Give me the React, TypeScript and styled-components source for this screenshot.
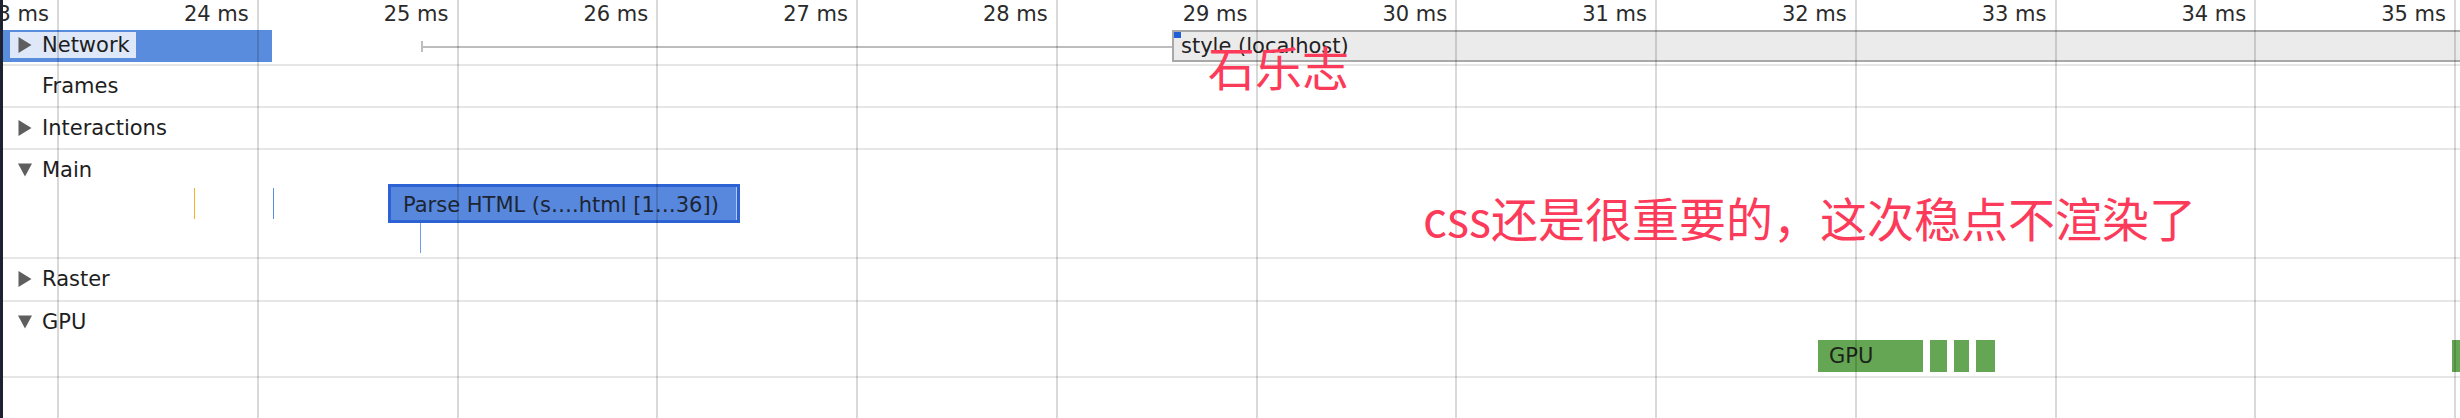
import React from "react";
import styled, { createGlobalStyle } from "styled-components";

const MS = 199.75; // pixels per millisecond
const FIRST_EDGE = 56; // right edge of the first grid cell (panel coords)
const FIRST_MS = 23;

const GlobalStyle = createGlobalStyle`
  html, body { margin: 0; padding: 0; background: #1c2230; overflow: hidden; }
  #root { width: 2460px; height: 418px; }
`;

const Panel = styled.div`
  position: relative;
  margin-left: 3px;
  width: 2457px;
  height: 418px;
  background: #ffffff;
  overflow: hidden;
  font-family: "DejaVu Sans", "Liberation Sans", sans-serif;
  font-size: 21px;
  line-height: 24px;
  color: #222;
`;

const Ruler = styled.div`
  display: flex;
  height: 30px;
  margin-left: ${FIRST_EDGE - MS}px;
`;

const RulerCell = styled.div`
  flex: 0 0 ${MS}px;
  box-sizing: border-box;
  padding: 2px 10px 0 0;
  text-align: right;
  color: #2a2a2a;
  white-space: nowrap;
`;

const GridOverlay = styled.div`
  position: absolute;
  top: 0;
  bottom: 0;
  left: ${FIRST_EDGE - MS}px;
  display: flex;
  pointer-events: none;
  z-index: 2;
`;

const GridCell = styled.div`
  flex: 0 0 ${MS}px;
  box-sizing: border-box;
  border-right: 2px solid rgba(0, 0, 0, 0.15);
`;

const Track = styled.div<{ $h: number }>`
  position: relative;
  height: ${(p) => p.$h}px;
  border-bottom: 2px solid #e6e6e6;
`;

const TrackHeader = styled.div<{ $highlight?: boolean }>`
  position: relative;
  z-index: 1;
  display: inline-flex;
  align-items: center;
  margin: ${(p) => (p.$highlight ? "2px" : "7px")} 0 0 7px;
  padding: 1px 6px 1px 8px;
  background: ${(p) => (p.$highlight ? "rgba(255, 255, 255, 0.8)" : "transparent")};
  color: #1e1e1e;
  white-space: nowrap;
`;

const Toggle = styled.span`
  display: inline-flex;
  align-items: center;
  width: 24px;
  height: 24px;
  flex: 0 0 24px;
`;

const Triangle: React.FC<{ open?: boolean; hidden?: boolean }> = ({ open, hidden }) => (
  <Toggle>
    {hidden ? null : open ? (
      <svg width="14" height="14" viewBox="0 0 14 14">
        <polygon points="0,0.5 14,0.5 7,13.5" fill="#5e5e5e" />
      </svg>
    ) : (
      <svg width="14" height="16" viewBox="0 0 14 16">
        <polygon points="0.5,0 13.5,8 0.5,16" fill="#5e5e5e" />
      </svg>
    )}
  </Toggle>
);

/* ---- Network track items ---- */
const RequestBar = styled.div<{ $x: number; $w: number }>`
  position: absolute;
  left: ${(p) => p.$x}px;
  top: 0;
  width: ${(p) => p.$w}px;
  height: 32px;
  background: #5a8cdd;
`;

const WhiskerTick = styled.div<{ $x: number }>`
  position: absolute;
  left: ${(p) => p.$x}px;
  top: 11px;
  width: 2px;
  height: 11px;
  background: #bdbdbd;
`;

const WhiskerLine = styled.div<{ $x: number; $w: number }>`
  position: absolute;
  left: ${(p) => p.$x}px;
  top: 16px;
  width: ${(p) => p.$w}px;
  height: 2px;
  background: #bdbdbd;
`;

const ResourceBar = styled.div<{ $x: number; $w: number }>`
  position: absolute;
  left: ${(p) => p.$x}px;
  top: 0;
  width: ${(p) => p.$w}px;
  height: 32px;
  box-sizing: border-box;
  border: 2px solid #a8a8a8;
  background: #ebebeb;
  padding-left: 7px;
  line-height: 28px;
  color: #222;
  white-space: nowrap;
`;

const PriorityMark = styled.span`
  position: absolute;
  left: 0;
  top: 0;
  width: 7px;
  height: 6px;
  background: #1f5fd8;
`;

/* ---- Main track items ---- */
const TickMark = styled.div<{ $x: number; $y: number; $h: number; $color: string }>`
  position: absolute;
  left: ${(p) => p.$x}px;
  top: ${(p) => p.$y}px;
  width: 1px;
  height: ${(p) => p.$h}px;
  background: ${(p) => p.$color};
`;

const TraceEvent = styled.div<{ $x: number; $y: number; $w: number }>`
  position: absolute;
  left: ${(p) => p.$x}px;
  top: ${(p) => p.$y}px;
  width: ${(p) => p.$w}px;
  height: 39px;
  box-sizing: border-box;
  border: 3px solid #2c62d3;
  background: #5788dd;
  box-shadow: inset -1px 0 0 rgba(255, 255, 255, 0.55);
  padding: 3px 0 0 12px;
  line-height: 30px;
  color: #1d2533;
  white-space: nowrap;
  overflow: hidden;
`;

/* ---- GPU track items ---- */
const GpuBar = styled.div<{ $x: number; $w: number }>`
  position: absolute;
  left: ${(p) => p.$x}px;
  top: 38px;
  width: ${(p) => p.$w}px;
  height: 32px;
  box-sizing: border-box;
  background: #64a653;
  padding-left: 11px;
  line-height: 32px;
  color: #1d231b;
  white-space: nowrap;
  overflow: hidden;
`;

/* ---- Annotation overlay ---- */
const Annotation = styled.div<{ $x: number; $y: number }>`
  position: absolute;
  left: ${(p) => p.$x}px;
  top: ${(p) => p.$y}px;
  z-index: 3;
  font-family: "Noto Sans CJK SC", "Noto Sans", sans-serif;
  font-size: 47px;
  line-height: 1;
  color: #fc3a5a;
  white-space: nowrap;
`;

const rulerMarks = Array.from({ length: 14 }, (_, i) => FIRST_MS + i);
const gpuSlices = [
  { x: 1815, w: 105, label: "GPU" },
  { x: 1927, w: 17 },
  { x: 1951, w: 15 },
  { x: 1973, w: 19 },
  { x: 2449, w: 20 },
];

export default function App() {
  return (
    <>
      <GlobalStyle />
      <Panel>
        <Ruler>
          {rulerMarks.map((m) => (
            <RulerCell key={m}>{m} ms</RulerCell>
          ))}
        </Ruler>

        <Track $h={34}>
          <RequestBar $x={0} $w={269} />
          <WhiskerTick $x={418} />
          <WhiskerLine $x={418} $w={751} />
          <ResourceBar $x={1169} $w={1400}>
            <PriorityMark />
            style (localhost)
          </ResourceBar>
          <TrackHeader $highlight>
            <Triangle />
            Network
          </TrackHeader>
        </Track>

        <Track $h={40}>
          <TrackHeader>
            <Triangle hidden />
            Frames
          </TrackHeader>
        </Track>

        <Track $h={40}>
          <TrackHeader>
            <Triangle />
            Interactions
          </TrackHeader>
        </Track>

        <Track $h={107}>
          <TrackHeader>
            <Triangle open />
            Main
          </TrackHeader>
          <TickMark $x={191} $y={38} $h={31} $color="#f2b12e" />
          <TickMark $x={270} $y={38} $h={31} $color="#5b8ee6" />
          <TraceEvent $x={385} $y={34} $w={352}>
            Parse HTML (s….html [1…36])
          </TraceEvent>
          <TickMark $x={417} $y={73} $h={30} $color="#6f9be9" />
        </Track>

        <Track $h={41}>
          <TrackHeader>
            <Triangle />
            Raster
          </TrackHeader>
        </Track>

        <Track $h={74}>
          <TrackHeader>
            <Triangle open />
            GPU
          </TrackHeader>
          {gpuSlices.map((s) => (
            <GpuBar key={s.x} $x={s.x} $w={s.w}>
              {s.label}
            </GpuBar>
          ))}
        </Track>

        <GridOverlay>
          {rulerMarks.map((m) => (
            <GridCell key={m} />
          ))}
        </GridOverlay>

        <Annotation $x={1205} $y={42}>石乐志</Annotation>
        <Annotation $x={1420} $y={193}>css还是很重要的，这次稳点不渲染了</Annotation>
      </Panel>
    </>
  );
}
